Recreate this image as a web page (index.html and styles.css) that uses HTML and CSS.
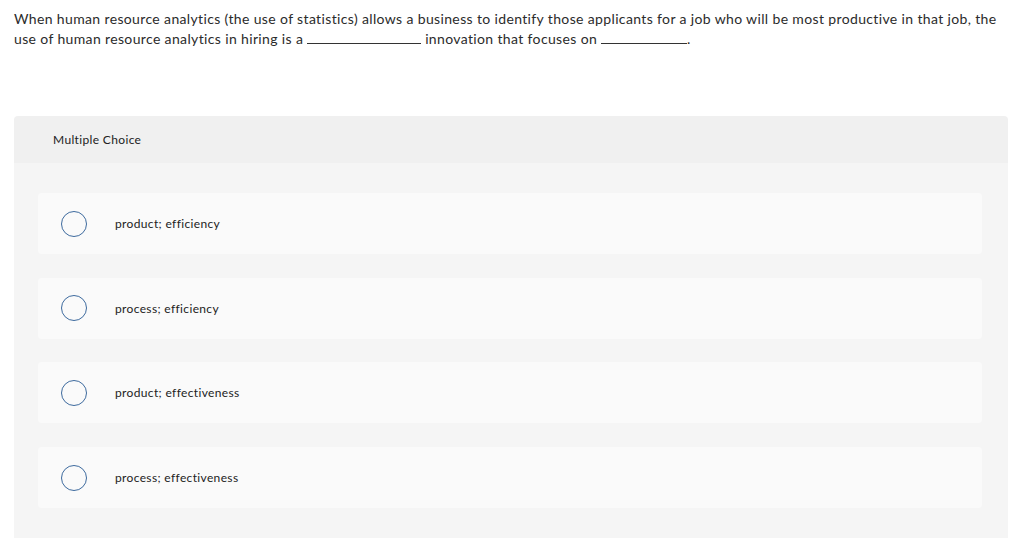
FILE: index.html
```html
<!DOCTYPE html>
<html>
<head>
<meta charset="utf-8">
<link rel="stylesheet" href="styles.css">
</head>
<body>
<div class="page">
  <p class="question">When human resource analytics (the use of statistics) allows a business to identify those applicants for a job who will be most productive in that job, the use of human resource analytics in hiring is a <span class="blank b1"></span> innovation that focuses on <span class="blank b2"></span>.</p>
  <section class="panel">
    <div class="panel-head">Multiple Choice</div>
    <div class="panel-body">
      <div class="option"><span class="radio"></span><span class="label">product; efficiency</span></div>
      <div class="option"><span class="radio"></span><span class="label">process; efficiency</span></div>
      <div class="option"><span class="radio"></span><span class="label">product; effectiveness</span></div>
      <div class="option"><span class="radio"></span><span class="label">process; effectiveness</span></div>
    </div>
  </section>
</div>
</body>
</html>
```
FILE: styles.css
```css
html, body { margin: 0; padding: 0; background: #fff; }
body { font-family: Lato, "Open Sans", sans-serif; color: #333; }
.page { padding: 9px 14px 0 14px; }
.question { margin: 0; font-size: 14px; line-height: 20px; letter-spacing: 0.36px; color: #2b2b2b; width: 996px; }
.blank { display: inline-block; border-bottom: 1px solid #333; height: 10px; vertical-align: baseline; }
.b1 { width: 114px; }
.b2 { width: 86px; }
.panel { margin-top: 67px; width: 994px; }
.panel-head { background: #f0f0f0; height: 47px; border-radius: 4px 4px 0 0; display: flex; align-items: center; padding-left: 39px; font-size: 12px; letter-spacing: 0.35px; color: #222; }
.panel-body { background: #f5f5f5; padding: 30px 26px 30px 24px; display: flex; flex-direction: column; gap: 23.7px; }
.option { background: #fafafa; height: 61px; border-radius: 4px; display: flex; align-items: center; padding-left: 23px; }
.radio { width: 24px; height: 24px; border: 1px solid #3d6a9e; border-radius: 50%; box-sizing: content-box; flex: none; }
.label { margin-left: 28px; font-size: 12px; letter-spacing: 0.35px; color: #222; }
```
